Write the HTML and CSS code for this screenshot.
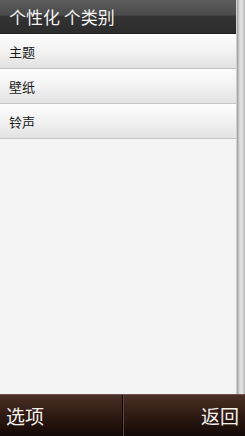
FILE: index.html
```html
<!DOCTYPE html>
<html lang="zh">
<head>
    <meta charset="UTF-8">
    <title>个性化</title>
    <link rel="stylesheet" href="styles.css">
</head>
<body>
    <div class="screen">
        <div class="main">
            <div class="content">
                <div class="title-bar">个性化 个类别</div>
                <div class="list">
                    <div class="row">主题</div>
                    <div class="row">壁纸</div>
                    <div class="row">铃声</div>
                </div>
            </div>
            <div class="scrollbar"></div>
        </div>
        <!-- softkeys -->
        <div class="softkeys">
            <div class="key left">选项</div>
            <div class="key right">返回</div>
        </div>
    </div>
</body>
</html>
```

FILE: styles.css
```css
html, body {
    margin: 0;
    padding: 0;
}
body {
    font-family: "Noto Sans CJK SC", "Noto Sans", sans-serif;
    width: 245px;
    height: 436px;
    overflow: hidden;
}
.screen {
    display: flex;
    flex-direction: column;
    height: 436px;
}
.main {
    flex: 1;
    display: flex;
    background: #f4f4f4;
}
.content {
    flex: 1;
}
.title-bar {
    height: 34px;
    box-sizing: border-box;
    padding-left: 9px;
    line-height: 34px;
    font-size: 17px;
    color: #f2f2f2;
    background: linear-gradient(#5c5c5c, #4a4a4a 45%, #333333 50%, #2c2c2c);
    border-bottom: 1px solid #1e1e1e;
}
.row {
    height: 34px;
    line-height: 35px;
    padding-left: 9px;
    font-size: 13px;
    color: #1a1a1a;
    background: linear-gradient(#fdfdfd, #f2f2f2 50%, #e2e2e2);
    border-bottom: 1px solid #c4c4c4;
}
.scrollbar {
    width: 8px;
    background: linear-gradient(90deg, #9a9a9a, #d4d4d4 30%, #e6e6e6 60%, #b4b4b4);
    border-left: 1px solid #cfcfcf;
}
.softkeys {
    height: 41px;
    display: flex;
    background: linear-gradient(#4b3026, #2e1a12 50%, #140906);
    border-top: 1px solid #6b5249;
}
.key {
    flex: 1;
    line-height: 42px;
    font-size: 19px;
    color: #f4f0ee;
}
.left {
    padding-left: 6px;
    border-right: 1px solid #0c0503;
    box-shadow: 1px 0 0 #5c443b;
}
.right {
    text-align: right;
    padding-right: 6px;
}
```
